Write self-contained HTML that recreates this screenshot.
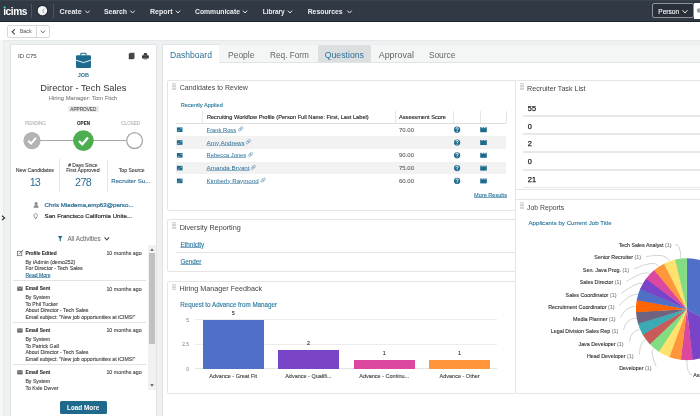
<!DOCTYPE html>
<html><head><meta charset="utf-8"><style>
html,body{margin:0;padding:0;}
body{width:700px;height:416px;overflow:hidden;position:relative;background:#fff;font-family:"Liberation Sans", sans-serif;}
#w{position:absolute;left:0;top:0;width:700px;height:416px;overflow:hidden;will-change:transform;}
.r{position:absolute;}
.t{position:absolute;white-space:nowrap;line-height:1;}
.s{-webkit-text-stroke:0.12px;}
svg.ov{position:absolute;left:0;top:0;}
</style></head><body><div id="w">
<div class="r" style="left:0.00px;top:0.00px;width:700.00px;height:21.00px;background:#313944;"></div>
<div class="r" style="left:0.00px;top:0.00px;width:700.00px;height:1.00px;background:#3a424c;"></div>
<div class="r" style="left:0.00px;top:21.00px;width:700.00px;height:1.00px;background:#1f252c;"></div>
<div class="t" style="left:3.20px;top:7.00px;font-size:10.20px;color:#ffffff;font-weight:700;letter-spacing:-0.45px;">icims</div>
<div class="r" style="left:31.40px;top:3.80px;width:1.00px;height:14.20px;background:#4b535d;"></div>
<div class="r" style="left:52.60px;top:3.80px;width:1.00px;height:14.20px;background:#4b535d;"></div>
<div class="t" style="left:59.60px;top:9.00px;font-size:7.10px;color:#eceef0;font-weight:700;">Create</div>
<div class="t" style="left:104.00px;top:9.00px;font-size:6.90px;color:#eceef0;font-weight:700;">Search</div>
<div class="t" style="left:150.00px;top:8.00px;font-size:7.00px;color:#eceef0;font-weight:700;">Report</div>
<div class="t" style="left:195.00px;top:9.00px;font-size:6.80px;color:#eceef0;font-weight:700;">Communicate</div>
<div class="t" style="left:262.70px;top:9.00px;font-size:6.50px;color:#eceef0;font-weight:700;">Library</div>
<div class="t" style="left:307.70px;top:9.00px;font-size:6.84px;color:#eceef0;font-weight:700;">Resources</div>
<div class="r" style="left:652.30px;top:2.90px;width:41.70px;height:15.60px;border:1px solid #8c939a;border-radius:2px;box-sizing:border-box;background:#2a3039;"></div>
<div class="t s" style="left:658.30px;top:9.00px;font-size:6.60px;color:#f4f4f4;font-weight:400;">Person</div>
<div class="r" style="left:694.00px;top:3.00px;width:6.00px;height:15.50px;background:#ffffff;"></div>
<div class="r" style="left:7.00px;top:25.00px;width:43.00px;height:13.00px;border:1px solid #d6d9da;border-radius:2px;box-sizing:border-box;background:#fff;"></div>
<div class="r" style="left:36.00px;top:26.00px;width:1.00px;height:11.00px;background:#d6d9da;"></div>
<div class="t s" style="left:19.80px;top:29.00px;font-size:5.30px;color:#777;font-weight:400;">Back</div>
<div class="r" style="left:0.00px;top:40.00px;width:700.00px;height:376.00px;background:#eef1f2;border-top:1px solid #e6eaea;box-sizing:border-box;"></div>
<div class="r" style="left:0.00px;top:40.00px;width:3.00px;height:376.00px;background:#f5f6f6;"></div>
<div class="r" style="left:3.00px;top:40.00px;width:1.00px;height:376.00px;background:#e8ebeb;"></div>
<div class="r" style="left:10.00px;top:44.00px;width:147.00px;height:376.00px;background:#fff;border:1px solid #e1e4e4;border-radius:2px;box-sizing:border-box;"></div>
<div class="t s" style="left:18.00px;top:53.00px;font-size:5.98px;color:#666;font-weight:400;">ID C75</div>
<div class="t" style="left:77.70px;top:73.00px;font-size:5.50px;color:#2a6f95;font-weight:700;">JOB</div>
<div class="t" style="left:40.30px;top:84.00px;font-size:9.31px;color:#333;font-weight:400;">Director - Tech Sales</div>
<div class="t s" style="left:48.75px;top:96.00px;font-size:5.87px;color:#888;font-weight:400;">Hiring Manager: Tom Fitch</div>
<div class="r" style="left:68.00px;top:105.60px;width:30.70px;height:6.70px;background:#ececec;"></div>
<div class="t s" style="left:70.30px;top:108.00px;font-size:4.70px;color:#555;font-weight:400;">APPROVED</div>
<div class="t s" style="left:25.00px;top:122.00px;font-size:4.60px;color:#b5b5b5;font-weight:400;">PENDING</div>
<div class="t s" style="left:77.00px;top:122.00px;font-size:4.60px;color:#333;font-weight:700;">OPEN</div>
<div class="t s" style="right:559.80px;top:122.00px;font-size:4.60px;color:#b5b5b5;font-weight:400;">CLOSED</div>
<div class="r" style="left:32.00px;top:140.00px;width:102.60px;height:1.40px;background:#a8a8a8;"></div>
<div class="t s" style="left:15.80px;top:168.00px;font-size:5.19px;color:#444;font-weight:400;">New Candidates</div>
<div class="t" style="left:-64.80px;width:200px;text-align:center;top:177.00px;font-size:10.80px;color:#2a6f95;font-weight:400;letter-spacing:-0.9px;text-indent:-0.9px;">13</div>
<div class="t s" style="left:-17.10px;width:200px;text-align:center;top:163.00px;font-size:5.00px;color:#444;font-weight:400;"># Days Since</div>
<div class="t s" style="left:-17.10px;width:200px;text-align:center;top:168.00px;font-size:5.20px;color:#444;font-weight:400;">First Approved</div>
<div class="t" style="left:-16.60px;width:200px;text-align:center;top:177.00px;font-size:10.80px;color:#2a6f95;font-weight:400;letter-spacing:-0.6px;text-indent:-0.6px;">278</div>
<div class="t s" style="left:118.80px;top:168.00px;font-size:5.10px;color:#444;font-weight:400;">Top Source</div>
<div class="t s" style="left:111.30px;top:178.00px;font-size:6.10px;color:#2a6f95;font-weight:400;">Recruiter Su...</div>
<div class="r" style="left:59.40px;top:159.30px;width:0.80px;height:33.20px;background:#e5e5e5;"></div>
<div class="r" style="left:106.60px;top:159.80px;width:0.80px;height:32.70px;background:#e5e5e5;"></div>
<div class="t s" style="left:44.60px;top:202.00px;font-size:6.18px;color:#2a6f95;font-weight:400;-webkit-text-stroke:0.22px;">Chris Miedema,emp63@perso...</div>
<div class="t s" style="left:44.60px;top:213.00px;font-size:6.10px;color:#333;font-weight:400;-webkit-text-stroke:0.22px;">San Francisco California Unite...</div>
<div class="t s" style="left:67.40px;top:236.00px;font-size:6.29px;color:#777;font-weight:400;">All Activities</div>
<div class="r" style="left:148.00px;top:245.00px;width:7.70px;height:145.00px;background:#f1f1f1;"></div>
<div class="r" style="left:148.80px;top:252.90px;width:6.20px;height:91.60px;background:#c1c1c1;"></div>
<div class="t s" style="left:25.40px;top:252.00px;font-size:4.86px;color:#333;font-weight:700;">Profile Edited</div>
<div class="t s" style="left:106.40px;top:251.00px;font-size:5.35px;color:#4a4a4a;font-weight:400;">10 months ago</div>
<div class="t s" style="left:25.40px;top:260.00px;font-size:5.20px;color:#444;font-weight:400;">By iAdmin (demo252)</div>
<div class="t s" style="left:25.40px;top:266.00px;font-size:5.20px;color:#444;font-weight:400;">For Director - Tech Sales</div>
<div class="t s" style="left:25.40px;top:273.00px;font-size:5.10px;color:#2a6f95;font-weight:400;text-decoration:underline;text-decoration-color:#7fa9c2;text-underline-offset:0.2px;">Read More</div>
<div class="r" style="left:13.20px;top:279.60px;width:132.80px;height:0.80px;background:#e2e2e2;"></div>
<div class="t s" style="left:25.40px;top:287.00px;font-size:4.86px;color:#333;font-weight:700;">Email Sent</div>
<div class="t s" style="left:106.40px;top:287.00px;font-size:5.35px;color:#4a4a4a;font-weight:400;">10 months ago</div>
<div class="t s" style="left:25.40px;top:295.00px;font-size:5.20px;color:#444;font-weight:400;">By System</div>
<div class="t s" style="left:25.40px;top:302.00px;font-size:5.20px;color:#444;font-weight:400;">To Phil Tucker</div>
<div class="t s" style="left:25.40px;top:308.00px;font-size:5.20px;color:#444;font-weight:400;">About Director - Tech Sales</div>
<div class="t s" style="left:25.40px;top:315.00px;font-size:5.20px;color:#444;font-weight:400;">Email subject: "New job opportunities at iCIMS!"</div>
<div class="r" style="left:13.20px;top:322.10px;width:132.80px;height:0.80px;background:#e2e2e2;"></div>
<div class="t s" style="left:25.40px;top:329.00px;font-size:4.86px;color:#333;font-weight:700;">Email Sent</div>
<div class="t s" style="left:106.40px;top:328.00px;font-size:5.35px;color:#4a4a4a;font-weight:400;">10 months ago</div>
<div class="t s" style="left:25.40px;top:337.00px;font-size:5.20px;color:#444;font-weight:400;">By System</div>
<div class="t s" style="left:25.40px;top:344.00px;font-size:5.20px;color:#444;font-weight:400;">To Patrick Gall</div>
<div class="t s" style="left:25.40px;top:350.00px;font-size:5.20px;color:#444;font-weight:400;">About Director - Tech Sales</div>
<div class="t s" style="left:25.40px;top:357.00px;font-size:5.20px;color:#444;font-weight:400;">Email subject: "New job opportunities at iCIMS!"</div>
<div class="r" style="left:13.20px;top:364.10px;width:132.80px;height:0.80px;background:#e2e2e2;"></div>
<div class="t s" style="left:25.40px;top:371.00px;font-size:4.86px;color:#333;font-weight:700;">Email Sent</div>
<div class="t s" style="left:106.40px;top:370.00px;font-size:5.35px;color:#4a4a4a;font-weight:400;">10 months ago</div>
<div class="t s" style="left:25.40px;top:379.00px;font-size:5.20px;color:#444;font-weight:400;">By System</div>
<div class="t s" style="left:25.40px;top:386.00px;font-size:5.20px;color:#444;font-weight:400;">To Kyle Dwyer</div>
<div class="r" style="left:11.50px;top:390.00px;width:136.50px;height:26.00px;background:#fff;"></div>
<div class="r" style="left:148.00px;top:390.00px;width:7.00px;height:26.00px;background:#fff;"></div>
<div class="r" style="left:59.50px;top:400.70px;width:47.50px;height:13.50px;background:#1f6a8a;border-radius:1.5px;"></div>
<div class="t" style="left:67.00px;top:405.00px;font-size:6.40px;color:#fff;font-weight:700;">Load More</div>
<div class="r" style="left:162.00px;top:62.00px;width:538.00px;height:354.00px;background:#fff;border-left:1px solid #dfe2e2;border-top:1px solid #e2e4e4;box-sizing:border-box;"></div>
<div class="r" style="left:162.00px;top:44.00px;width:58.00px;height:19.00px;background:#fff;border:1px solid #dfe2e2;border-bottom:none;border-radius:2px 2px 0 0;box-sizing:border-box;"></div>
<div class="r" style="left:219.00px;top:44.50px;width:481.00px;height:17.50px;background:#f4f5f5;"></div>
<div class="r" style="left:318.00px;top:44.50px;width:53.00px;height:17.50px;background:#dcdfe0;border-radius:2px 2px 0 0;"></div>
<div class="t" style="left:170.00px;top:51.00px;font-size:8.59px;color:#2f7297;font-weight:400;">Dashboard</div>
<div class="t" style="left:228.00px;top:51.00px;font-size:8.51px;color:#666;font-weight:400;">People</div>
<div class="t" style="left:270.00px;top:52.00px;font-size:8.26px;color:#666;font-weight:400;">Req. Form</div>
<div class="t" style="left:324.70px;top:51.00px;font-size:8.73px;color:#2f7297;font-weight:400;">Questions</div>
<div class="t" style="left:378.70px;top:51.00px;font-size:8.94px;color:#666;font-weight:400;">Approval</div>
<div class="t" style="left:428.90px;top:51.00px;font-size:8.33px;color:#666;font-weight:400;">Source</div>
<div class="r" style="left:167.00px;top:80.00px;width:349.00px;height:131.00px;background:#fff;border:1px solid #e4e6e6;border-radius:2px;box-sizing:border-box;"></div>
<div class="r" style="left:172.00px;top:83.10px;width:4.00px;height:6.60px;background:repeating-linear-gradient(#d6d6d6 0px,#d6d6d6 1px,#ececec 1px,#ececec 1.6px);"></div>
<div class="t" style="left:179.70px;top:84.00px;font-size:7.02px;color:#444;font-weight:400;">Candidates to Review</div>
<div class="t s" style="left:180.70px;top:103.00px;font-size:5.67px;color:#2a7aa0;font-weight:400;">Recently Applied</div>
<div class="r" style="left:505.50px;top:110.50px;width:1.00px;height:12.50px;background:#e4e4e4;"></div>
<div class="r" style="left:201.50px;top:110.50px;width:1.00px;height:12.50px;background:#e6e6e6;"></div>
<div class="r" style="left:394.50px;top:110.50px;width:1.00px;height:12.50px;background:#e6e6e6;"></div>
<div class="r" style="left:453.30px;top:110.50px;width:1.00px;height:12.50px;background:#e6e6e6;"></div>
<div class="r" style="left:479.80px;top:110.50px;width:1.00px;height:12.50px;background:#e6e6e6;"></div>
<div class="r" style="left:175.70px;top:123.00px;width:330.80px;height:1.00px;background:#dedede;"></div>
<div class="t s" style="left:206.90px;top:115.00px;font-size:5.67px;color:#222;font-weight:400;">Recruiting Workflow Profile (Person Full Name: First, Last Label)</div>
<div class="t s" style="left:399.00px;top:115.00px;font-size:5.64px;color:#222;font-weight:400;">Assessment Score</div>
<div class="t" style="left:206.60px;top:128.00px;font-size:5.79px;color:#2a6f95;font-weight:400;text-decoration:underline;text-decoration-color:#8fb5cc;text-underline-offset:0.2px;">Frank Ross</div>
<div class="t s" style="left:399.00px;top:127.00px;font-size:6.00px;color:#666;font-weight:400;">70.00</div>
<div class="r" style="left:175.70px;top:136.10px;width:330.30px;height:12.80px;background:#f2f2f2;"></div>
<div class="t" style="left:206.60px;top:140.00px;font-size:6.23px;color:#2a6f95;font-weight:400;text-decoration:underline;text-decoration-color:#8fb5cc;text-underline-offset:0.2px;">Amy Andrews</div>
<div class="t" style="left:206.60px;top:153.00px;font-size:5.74px;color:#2a6f95;font-weight:400;text-decoration:underline;text-decoration-color:#8fb5cc;text-underline-offset:0.2px;">Rebecca Jones</div>
<div class="t s" style="left:399.00px;top:152.00px;font-size:6.00px;color:#666;font-weight:400;">90.00</div>
<div class="r" style="left:175.70px;top:161.70px;width:330.30px;height:12.80px;background:#f2f2f2;"></div>
<div class="t" style="left:206.60px;top:165.00px;font-size:6.24px;color:#2a6f95;font-weight:400;text-decoration:underline;text-decoration-color:#8fb5cc;text-underline-offset:0.2px;">Amanda Bryant</div>
<div class="t s" style="left:399.00px;top:165.00px;font-size:6.00px;color:#666;font-weight:400;">75.00</div>
<div class="t" style="left:206.60px;top:178.00px;font-size:6.17px;color:#2a6f95;font-weight:400;text-decoration:underline;text-decoration-color:#8fb5cc;text-underline-offset:0.2px;">Kimberly Raymond</div>
<div class="t s" style="left:399.00px;top:178.00px;font-size:6.00px;color:#666;font-weight:400;">60.00</div>
<div class="t s" style="left:474.00px;top:193.00px;font-size:5.60px;color:#2a7aa0;font-weight:400;text-decoration:underline;text-decoration-color:#7fa9c2;text-underline-offset:0.2px;">More Results</div>
<div class="r" style="left:515.00px;top:80.00px;width:191.00px;height:109.50px;background:#fff;border:1px solid #e4e6e6;border-radius:2px;box-sizing:border-box;"></div>
<div class="r" style="left:520.00px;top:83.30px;width:4.00px;height:6.60px;background:repeating-linear-gradient(#d6d6d6 0px,#d6d6d6 1px,#ececec 1px,#ececec 1.6px);"></div>
<div class="t" style="left:527.10px;top:86.00px;font-size:7.13px;color:#444;font-weight:400;">Recruiter Task List</div>
<div class="t" style="left:527.80px;top:105.00px;font-size:7.40px;color:#222;font-weight:400;-webkit-text-stroke:0.25px;">55</div>
<div class="r" style="left:523.40px;top:115.30px;width:182.60px;height:1.40px;background:#e8e8e8;"></div>
<div class="t" style="left:527.80px;top:123.00px;font-size:7.40px;color:#222;font-weight:400;-webkit-text-stroke:0.25px;">0</div>
<div class="r" style="left:523.40px;top:133.25px;width:182.60px;height:1.40px;background:#e8e8e8;"></div>
<div class="t" style="left:527.80px;top:140.00px;font-size:7.40px;color:#222;font-weight:400;-webkit-text-stroke:0.25px;">2</div>
<div class="r" style="left:523.40px;top:151.20px;width:182.60px;height:1.40px;background:#e8e8e8;"></div>
<div class="t" style="left:527.80px;top:158.00px;font-size:7.40px;color:#222;font-weight:400;-webkit-text-stroke:0.25px;">0</div>
<div class="r" style="left:523.40px;top:169.15px;width:182.60px;height:1.40px;background:#e8e8e8;"></div>
<div class="t" style="left:527.80px;top:176.00px;font-size:7.40px;color:#222;font-weight:400;-webkit-text-stroke:0.25px;">21</div>
<div class="r" style="left:523.40px;top:187.10px;width:182.60px;height:1.40px;background:#e8e8e8;"></div>
<div class="r" style="left:167.00px;top:219.00px;width:349.00px;height:53.00px;background:#fff;border:1px solid #e4e6e6;border-radius:2px;box-sizing:border-box;"></div>
<div class="r" style="left:172.00px;top:222.40px;width:4.00px;height:6.60px;background:repeating-linear-gradient(#d6d6d6 0px,#d6d6d6 1px,#ececec 1px,#ececec 1.6px);"></div>
<div class="t" style="left:179.65px;top:224.00px;font-size:7.24px;color:#444;font-weight:400;">Diversity Reporting</div>
<div class="t s" style="left:180.40px;top:242.00px;font-size:6.32px;color:#2a7aa0;font-weight:400;text-decoration:underline;text-decoration-color:#7fa9c2;text-underline-offset:0.2px;">Ethnicity</div>
<div class="r" style="left:175.60px;top:251.80px;width:339.40px;height:0.80px;background:#e4e4e4;"></div>
<div class="t s" style="left:180.40px;top:259.00px;font-size:6.32px;color:#2a7aa0;font-weight:400;text-decoration:underline;text-decoration-color:#7fa9c2;text-underline-offset:0.2px;">Gender</div>
<div class="r" style="left:167.00px;top:281.00px;width:349.00px;height:112.50px;background:#fff;border:1px solid #e4e6e6;border-radius:2px;box-sizing:border-box;"></div>
<div class="r" style="left:172.00px;top:283.90px;width:4.00px;height:6.60px;background:repeating-linear-gradient(#d6d6d6 0px,#d6d6d6 1px,#ececec 1px,#ececec 1.6px);"></div>
<div class="t" style="left:179.50px;top:285.00px;font-size:7.20px;color:#444;font-weight:400;">Hiring Manager Feedback</div>
<div class="t s" style="left:180.30px;top:302.00px;font-size:6.28px;color:#2a7aa0;font-weight:400;">Request to Advance from Manager</div>
<div class="r" style="left:194.60px;top:319.40px;width:302.40px;height:0.80px;background:#ececec;"></div>
<div class="r" style="left:194.60px;top:343.80px;width:302.40px;height:0.80px;background:#ececec;"></div>
<div class="r" style="left:194.60px;top:368.30px;width:302.40px;height:0.80px;background:#e4e4e4;"></div>
<div class="t s" style="right:511.00px;top:319.00px;font-size:4.80px;color:#999;font-weight:400;">5</div>
<div class="t s" style="right:511.00px;top:343.00px;font-size:4.80px;color:#999;font-weight:400;">2.5</div>
<div class="t s" style="right:511.00px;top:368.00px;font-size:4.80px;color:#999;font-weight:400;">0</div>
<div class="r" style="left:202.80px;top:319.70px;width:60.80px;height:48.90px;background:#5070c8;"></div>
<div class="t s" style="left:133.20px;width:200px;text-align:center;top:311.00px;font-size:5.40px;color:#333;font-weight:400;">5</div>
<div class="t s" style="left:133.20px;width:200px;text-align:center;top:374.00px;font-size:5.50px;color:#444;font-weight:400;">Advance - Great Fit</div>
<div class="r" style="left:278.00px;top:349.70px;width:60.80px;height:18.90px;background:#7a44c8;"></div>
<div class="t s" style="left:208.40px;width:200px;text-align:center;top:341.00px;font-size:5.40px;color:#333;font-weight:400;">2</div>
<div class="t s" style="left:208.40px;width:200px;text-align:center;top:374.00px;font-size:5.50px;color:#444;font-weight:400;">Advance - Qualifi...</div>
<div class="r" style="left:353.80px;top:359.70px;width:60.80px;height:8.90px;background:#dc48a0;"></div>
<div class="t s" style="left:284.20px;width:200px;text-align:center;top:351.00px;font-size:5.40px;color:#333;font-weight:400;">1</div>
<div class="t s" style="left:284.20px;width:200px;text-align:center;top:374.00px;font-size:5.50px;color:#444;font-weight:400;">Advance - Continu...</div>
<div class="r" style="left:429.20px;top:359.70px;width:60.80px;height:8.90px;background:#ff963c;"></div>
<div class="t s" style="left:359.60px;width:200px;text-align:center;top:351.00px;font-size:5.40px;color:#333;font-weight:400;">1</div>
<div class="t s" style="left:359.60px;width:200px;text-align:center;top:374.00px;font-size:5.50px;color:#444;font-weight:400;">Advance - Other</div>
<div class="r" style="left:515.00px;top:199.00px;width:191.00px;height:194.50px;background:#fff;border:1px solid #e4e6e6;border-radius:2px;box-sizing:border-box;"></div>
<div class="r" style="left:520.00px;top:202.40px;width:4.00px;height:6.60px;background:repeating-linear-gradient(#d6d6d6 0px,#d6d6d6 1px,#ececec 1px,#ececec 1.6px);"></div>
<div class="t" style="left:527.00px;top:205.00px;font-size:6.92px;color:#444;font-weight:400;">Job Reports</div>
<div class="t s" style="left:528.50px;top:220.00px;font-size:6.14px;color:#2a7aa0;font-weight:400;">Applicants by Current Job Title</div>
<div class="t s" style="right:28.50px;top:243.00px;font-size:5.35px;color:#333;font-weight:400;">Tech Sales Analyst <span style="color:#888">(1)</span></div>
<div class="t s" style="right:59.00px;top:255.00px;font-size:5.35px;color:#333;font-weight:400;">Senior Recruiter <span style="color:#888">(1)</span></div>
<div class="t s" style="right:71.10px;top:268.00px;font-size:5.35px;color:#333;font-weight:400;">Sen. Java Prog. <span style="color:#888">(1)</span></div>
<div class="t s" style="right:78.70px;top:280.00px;font-size:5.35px;color:#333;font-weight:400;">Sales Director <span style="color:#888">(1)</span></div>
<div class="t s" style="right:83.60px;top:293.00px;font-size:5.35px;color:#333;font-weight:400;">Sales Coordinator <span style="color:#888">(1)</span></div>
<div class="t s" style="right:85.50px;top:305.00px;font-size:5.35px;color:#333;font-weight:400;">Recruitment Coordinator <span style="color:#888">(1)</span></div>
<div class="t s" style="right:84.50px;top:317.00px;font-size:5.35px;color:#333;font-weight:400;">Media Planner <span style="color:#888">(1)</span></div>
<div class="t s" style="right:81.80px;top:329.00px;font-size:5.35px;color:#333;font-weight:400;">Legal Division Sales Rep <span style="color:#888">(1)</span></div>
<div class="t s" style="right:76.40px;top:342.00px;font-size:5.35px;color:#333;font-weight:400;">Java Developer <span style="color:#888">(1)</span></div>
<div class="t s" style="right:66.40px;top:354.00px;font-size:5.35px;color:#333;font-weight:400;">Head Developer <span style="color:#888">(1)</span></div>
<div class="t s" style="right:48.50px;top:366.00px;font-size:5.35px;color:#333;font-weight:400;">Developer <span style="color:#888">(1)</span></div>
<div class="t s" style="left:693.30px;top:373.00px;font-size:5.35px;color:#333;font-weight:400;">Associate (1)</div>
<svg class="ov" width="700" height="416" viewBox="0 0 700 416"><path d="M686.9 309.2 L686.90 258.20 A51.0 51.0 0 0 1 730.80 335.16 Z" fill="#5070c8"/><path d="M686.9 309.2 L731.07 334.70 A51.0 51.0 0 0 1 692.29 359.91 Z" fill="#7a44c8"/><path d="M686.9 309.2 L692.82 359.86 A51.0 51.0 0 0 1 680.45 359.79 Z" fill="#dc48a0"/><path d="M686.9 309.2 L680.98 359.86 A51.0 51.0 0 0 1 668.96 356.94 Z" fill="#ff963c"/><path d="M686.9 309.2 L669.46 357.12 A51.0 51.0 0 0 1 658.43 351.51 Z" fill="#ffe16e"/><path d="M686.9 309.2 L658.88 351.81 A51.0 51.0 0 0 1 649.44 343.81 Z" fill="#82dc82"/><path d="M686.9 309.2 L649.80 344.20 A51.0 51.0 0 0 1 642.47 334.24 Z" fill="#c85a5a"/><path d="M686.9 309.2 L642.73 334.70 A51.0 51.0 0 0 1 637.89 323.31 Z" fill="#3caab4"/><path d="M686.9 309.2 L638.04 323.83 A51.0 51.0 0 0 1 635.96 311.63 Z" fill="#6e6482"/><path d="M686.9 309.2 L635.99 312.17 A51.0 51.0 0 0 1 636.77 299.82 Z" fill="#ff6400"/><path d="M686.9 309.2 L636.67 300.34 A51.0 51.0 0 0 1 640.29 288.51 Z" fill="#5070c8"/><path d="M686.9 309.2 L640.07 289.00 A51.0 51.0 0 0 1 646.31 278.32 Z" fill="#7a44c8"/><path d="M686.9 309.2 L645.99 278.74 A51.0 51.0 0 0 1 654.53 269.79 Z" fill="#dc48a0"/><path d="M686.9 309.2 L654.12 270.13 A51.0 51.0 0 0 1 664.49 263.39 Z" fill="#ff963c"/><path d="M686.9 309.2 L664.01 263.62 A51.0 51.0 0 0 1 675.66 259.45 Z" fill="#ffe16e"/><path d="M686.9 309.2 L675.14 259.57 A51.0 51.0 0 0 1 686.90 258.20 Z" fill="#82dc82"/><path d="M675 244.6 Q680.5 243.5 680.89 258.05" fill="none" stroke="#b5b5b5" stroke-width="0.6"/><path d="M646 256.6 Q666 252.5 669.29 260.81" fill="none" stroke="#b5b5b5" stroke-width="0.6"/><path d="M634 269.0 Q655 259.5 658.63 266.16" fill="none" stroke="#b5b5b5" stroke-width="0.6"/><path d="M626 281.6 Q646 269.5 649.42 273.88" fill="none" stroke="#b5b5b5" stroke-width="0.6"/><path d="M621 293.6 Q637.5 281.5 642.30 283.45" fill="none" stroke="#b5b5b5" stroke-width="0.6"/><path d="M619 305.6 Q630 293.5 637.57 294.40" fill="none" stroke="#b5b5b5" stroke-width="0.6"/><path d="M620.5 317.6 Q625 307 635.49 306.24" fill="none" stroke="#b5b5b5" stroke-width="0.6"/><path d="M623.4 330.2 Q626 318.5 636.18 318.14" fill="none" stroke="#b5b5b5" stroke-width="0.6"/><path d="M629.3 341.9 Q631 330.5 639.60 329.57" fill="none" stroke="#b5b5b5" stroke-width="0.6"/><path d="M639.4 354.5 Q640 341.5 645.61 339.98" fill="none" stroke="#b5b5b5" stroke-width="0.6"/><path d="M656.2 366.3 Q649.5 351.5 653.80 348.65" fill="none" stroke="#b5b5b5" stroke-width="0.6"/><path d="M686.90 360.70 Q686.9 374.5 692 374.8" fill="none" stroke="#b5b5b5" stroke-width="0.6"/><circle cx="4.4" cy="7.3" r="0.95" fill="#3cc3c8"/><circle cx="42.4" cy="10.7" r="4.8" fill="#f4f4f4"/><circle cx="42.4" cy="10.7" r="5.3" fill="none" stroke="#1f252d" stroke-width="0.8"/><path d="M44.4 8.6 L42.6 10.8 L44.3 13.2" fill="none" stroke="#8a9097" stroke-width="0.8"/><path d="M85.3 10.6 L87.5 13.0 L89.7 10.6" fill="none" stroke="#e6e8ea" stroke-width="1.0"/><path d="M130.3 10.6 L132.5 13.0 L134.70000000000002 10.6" fill="none" stroke="#e6e8ea" stroke-width="1.0"/><path d="M175.8 10.6 L178.0 13.0 L180.20000000000002 10.6" fill="none" stroke="#e6e8ea" stroke-width="1.0"/><path d="M242.8 10.6 L245.0 13.0 L247.20000000000002 10.6" fill="none" stroke="#e6e8ea" stroke-width="1.0"/><path d="M287.8 10.6 L290.0 13.0 L292.2 10.6" fill="none" stroke="#e6e8ea" stroke-width="1.0"/><path d="M347.3 10.6 L349.5 13.0 L351.7 10.6" fill="none" stroke="#e6e8ea" stroke-width="1.0"/><path d="M682.5 10.2 L685.0 13.0 L687.5 10.2" fill="none" stroke="#e6e8ea" stroke-width="1.0"/><circle cx="699" cy="10.5" r="2.2" fill="#9aa0a5"/><path d="M14.799999999999999 29.3 L12.2 31.8 L14.799999999999999 34.3" fill="none" stroke="#444" stroke-width="1.1"/><path d="M40.8 30.6 L42.9 32.9 L45.0 30.6" fill="none" stroke="#555" stroke-width="0.9"/><path d="M2.0 215.8 L4.6 217.9 L2.0 220.0" fill="none" stroke="#333" stroke-width="1.2"/><path d="M80.8 55.5 v-1.4 q0 -0.8 0.8 -0.8 h3.6 q0.8 0 0.8 0.8 v1.4" fill="none" stroke="#1d6a8d" stroke-width="1.1"/><rect x="76" y="55.3" width="15" height="12.6" rx="1.2" fill="#1d6a8d"/><path d="M76 60.2 L83.5 62.6 L91 60.2" fill="none" stroke="#fff" stroke-width="0.9"/><rect x="128.8" y="53.6" width="5" height="5.6" fill="#3a3a3a"/><rect x="129.6" y="52.8" width="4.9" height="5.6" fill="#484848"/><path d="M144.2 53 h2.4 l0.8 2.2 h-4 z" fill="#3a3a3a"/><rect x="142" y="55.2" width="6.8" height="3.2" rx="0.6" fill="#3a3a3a"/><rect x="143.6" y="57.6" width="3.6" height="1.8" fill="#777"/><circle cx="32" cy="140.6" r="8.6" fill="#b3b3b3"/><path d="M28.2 140.8 L31 143.6 L36 137.8" fill="none" stroke="#fff" stroke-width="2"/><circle cx="83.4" cy="140.6" r="10.3" fill="#4cae4f"/><path d="M79 141 L82.3 144.3 L88 137.6" fill="none" stroke="#fff" stroke-width="2.3"/><circle cx="134.6" cy="140.6" r="7.9" fill="#fff" stroke="#a8a8a8" stroke-width="1.3"/><circle cx="36.1" cy="203.4" r="1.5" fill="#888"/><path d="M33.6 207.8 q0 -2.8 2.5 -2.8 q2.5 0 2.5 2.8 z" fill="#888"/><path d="M35.7 219 L34.1 216.3 A1.8 1.8 0 1 1 37.3 216.3 Z" fill="none" stroke="#7a7a7a" stroke-width="0.8"/><path d="M57.9 236.1 h4.6 l-1.7 2.4 v3 l-1.2 -0.7 v-2.3 z" fill="#1d6a8d"/><path d="M104.5 237.4 L106.8 239.9 L109.1 237.4" fill="none" stroke="#505050" stroke-width="1.1"/><path d="M150.2 250.8 L152 248.4 L153.8 250.8 Z" fill="#505050"/><path d="M150.2 384.2 L152 386.6 L153.8 384.2 Z" fill="#505050"/><rect x="17.4" y="251.3" width="4.4" height="4.4" fill="none" stroke="#666" stroke-width="0.7"/><path d="M19 254.3 L23.2 249.9" stroke="#666" stroke-width="0.9"/><rect x="17.2" y="286.59999999999997" width="5.4" height="4.2" fill="#666"/><path d="M17.6 287.2 L19.9 289.0 L22.2 287.2" fill="none" stroke="#ddd" stroke-width="0.5"/><rect x="17.2" y="328.4" width="5.4" height="4.2" fill="#666"/><path d="M17.6 329.0 L19.9 330.8 L22.2 329.0" fill="none" stroke="#ddd" stroke-width="0.5"/><rect x="17.2" y="370.2" width="5.4" height="4.2" fill="#666"/><path d="M17.6 370.8 L19.9 372.6 L22.2 370.8" fill="none" stroke="#ddd" stroke-width="0.5"/><rect x="176.9" y="127.39999999999999" width="5.6" height="4.6" fill="#1d6a8d"/><rect x="180.4" y="128.2" width="1.4" height="1.2" fill="#8fb8cc"/><rect x="177.6" y="130.29999999999998" width="2.2" height="0.8" fill="#8fb8cc"/><g transform="translate(240.7,128.89999999999998) rotate(-45)"><rect x="-2.6" y="-1.1" width="3" height="2.2" rx="1.1" fill="none" stroke="#5a8fb0" stroke-width="0.6"/><rect x="-0.4" y="-1.1" width="3" height="2.2" rx="1.1" fill="none" stroke="#5a8fb0" stroke-width="0.6"/></g><circle cx="457.1" cy="129.7" r="3.1" fill="#1d6a8d"/><path d="M455.9 128.89999999999998 q0 -1.3 1.2 -1.3 q1.2 0 1.2 1.1 q0 0.7 -1.2 1.1 v0.7" fill="none" stroke="#fff" stroke-width="0.85"/><circle cx="457.1" cy="131.45" r="0.5" fill="#fff"/><rect x="480.2" y="128.1" width="6.6" height="4.1" fill="#1d6a8d"/><rect x="480.2" y="127.19999999999999" width="1.5" height="1" fill="#1d6a8d"/><rect x="482.75" y="127.19999999999999" width="1.5" height="1" fill="#1d6a8d"/><rect x="485.3" y="127.19999999999999" width="1.5" height="1" fill="#1d6a8d"/><rect x="176.9" y="140.2" width="5.6" height="4.6" fill="#1d6a8d"/><rect x="180.4" y="141.0" width="1.4" height="1.2" fill="#8fb8cc"/><rect x="177.6" y="143.1" width="2.2" height="0.8" fill="#8fb8cc"/><g transform="translate(248.3,141.7) rotate(-45)"><rect x="-2.6" y="-1.1" width="3" height="2.2" rx="1.1" fill="none" stroke="#5a8fb0" stroke-width="0.6"/><rect x="-0.4" y="-1.1" width="3" height="2.2" rx="1.1" fill="none" stroke="#5a8fb0" stroke-width="0.6"/></g><circle cx="457.1" cy="142.5" r="3.1" fill="#1d6a8d"/><path d="M455.9 141.7 q0 -1.3 1.2 -1.3 q1.2 0 1.2 1.1 q0 0.7 -1.2 1.1 v0.7" fill="none" stroke="#fff" stroke-width="0.85"/><circle cx="457.1" cy="144.25" r="0.5" fill="#fff"/><rect x="480.2" y="140.9" width="6.6" height="4.1" fill="#1d6a8d"/><rect x="480.2" y="140.0" width="1.5" height="1" fill="#1d6a8d"/><rect x="482.75" y="140.0" width="1.5" height="1" fill="#1d6a8d"/><rect x="485.3" y="140.0" width="1.5" height="1" fill="#1d6a8d"/><rect x="176.9" y="152.99999999999997" width="5.6" height="4.6" fill="#1d6a8d"/><rect x="180.4" y="153.79999999999998" width="1.4" height="1.2" fill="#8fb8cc"/><rect x="177.6" y="155.89999999999998" width="2.2" height="0.8" fill="#8fb8cc"/><g transform="translate(250.5,154.49999999999997) rotate(-45)"><rect x="-2.6" y="-1.1" width="3" height="2.2" rx="1.1" fill="none" stroke="#5a8fb0" stroke-width="0.6"/><rect x="-0.4" y="-1.1" width="3" height="2.2" rx="1.1" fill="none" stroke="#5a8fb0" stroke-width="0.6"/></g><circle cx="457.1" cy="155.29999999999998" r="3.1" fill="#1d6a8d"/><path d="M455.9 154.49999999999997 q0 -1.3 1.2 -1.3 q1.2 0 1.2 1.1 q0 0.7 -1.2 1.1 v0.7" fill="none" stroke="#fff" stroke-width="0.85"/><circle cx="457.1" cy="157.04999999999998" r="0.5" fill="#fff"/><rect x="480.2" y="153.7" width="6.6" height="4.1" fill="#1d6a8d"/><rect x="480.2" y="152.79999999999998" width="1.5" height="1" fill="#1d6a8d"/><rect x="482.75" y="152.79999999999998" width="1.5" height="1" fill="#1d6a8d"/><rect x="485.3" y="152.79999999999998" width="1.5" height="1" fill="#1d6a8d"/><rect x="176.9" y="165.79999999999998" width="5.6" height="4.6" fill="#1d6a8d"/><rect x="180.4" y="166.6" width="1.4" height="1.2" fill="#8fb8cc"/><rect x="177.6" y="168.7" width="2.2" height="0.8" fill="#8fb8cc"/><g transform="translate(253.3,167.29999999999998) rotate(-45)"><rect x="-2.6" y="-1.1" width="3" height="2.2" rx="1.1" fill="none" stroke="#5a8fb0" stroke-width="0.6"/><rect x="-0.4" y="-1.1" width="3" height="2.2" rx="1.1" fill="none" stroke="#5a8fb0" stroke-width="0.6"/></g><circle cx="457.1" cy="168.1" r="3.1" fill="#1d6a8d"/><path d="M455.9 167.29999999999998 q0 -1.3 1.2 -1.3 q1.2 0 1.2 1.1 q0 0.7 -1.2 1.1 v0.7" fill="none" stroke="#fff" stroke-width="0.85"/><circle cx="457.1" cy="169.85" r="0.5" fill="#fff"/><rect x="480.2" y="166.5" width="6.6" height="4.1" fill="#1d6a8d"/><rect x="480.2" y="165.6" width="1.5" height="1" fill="#1d6a8d"/><rect x="482.75" y="165.6" width="1.5" height="1" fill="#1d6a8d"/><rect x="485.3" y="165.6" width="1.5" height="1" fill="#1d6a8d"/><rect x="176.9" y="178.59999999999997" width="5.6" height="4.6" fill="#1d6a8d"/><rect x="180.4" y="179.39999999999998" width="1.4" height="1.2" fill="#8fb8cc"/><rect x="177.6" y="181.49999999999997" width="2.2" height="0.8" fill="#8fb8cc"/><g transform="translate(263.1,180.09999999999997) rotate(-45)"><rect x="-2.6" y="-1.1" width="3" height="2.2" rx="1.1" fill="none" stroke="#5a8fb0" stroke-width="0.6"/><rect x="-0.4" y="-1.1" width="3" height="2.2" rx="1.1" fill="none" stroke="#5a8fb0" stroke-width="0.6"/></g><circle cx="457.1" cy="180.89999999999998" r="3.1" fill="#1d6a8d"/><path d="M455.9 180.09999999999997 q0 -1.3 1.2 -1.3 q1.2 0 1.2 1.1 q0 0.7 -1.2 1.1 v0.7" fill="none" stroke="#fff" stroke-width="0.85"/><circle cx="457.1" cy="182.64999999999998" r="0.5" fill="#fff"/><rect x="480.2" y="179.29999999999998" width="6.6" height="4.1" fill="#1d6a8d"/><rect x="480.2" y="178.39999999999998" width="1.5" height="1" fill="#1d6a8d"/><rect x="482.75" y="178.39999999999998" width="1.5" height="1" fill="#1d6a8d"/><rect x="485.3" y="178.39999999999998" width="1.5" height="1" fill="#1d6a8d"/></svg>
</div></body></html>
